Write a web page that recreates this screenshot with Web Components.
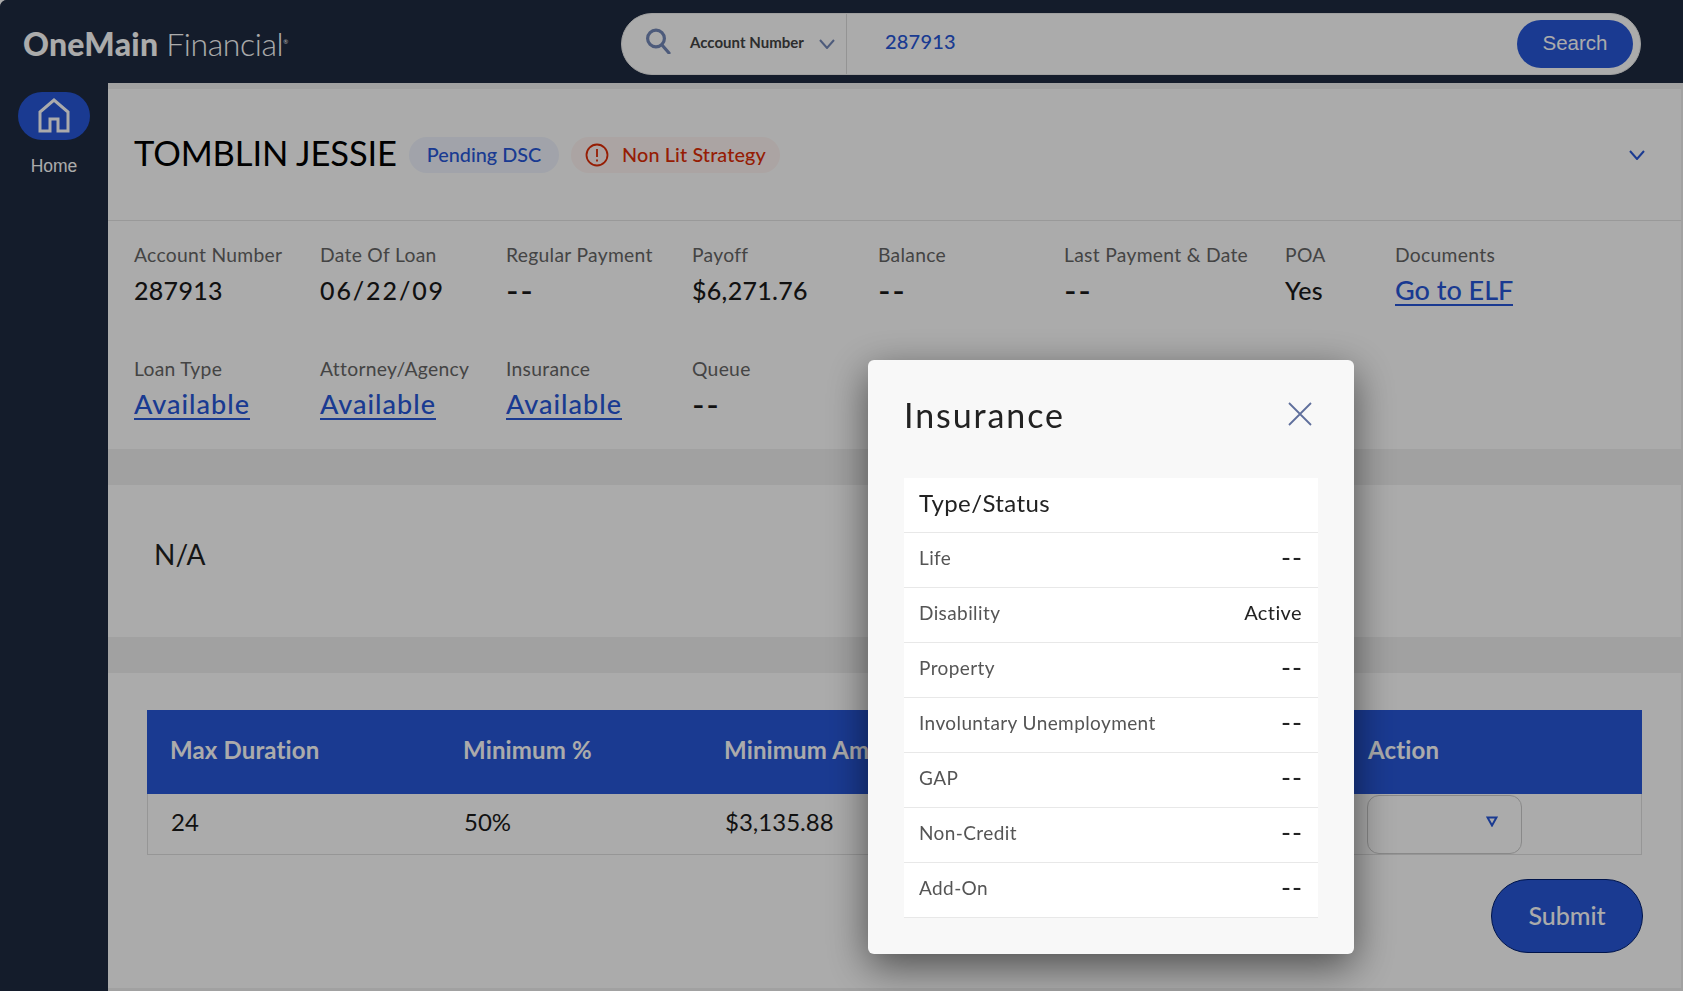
<!DOCTYPE html>
<html lang="en"><head><meta charset="utf-8"><title>Insurance</title>
<style>
html,body{margin:0;height:100%;background:#fff;overflow:hidden}
body{font-family:Lato,"Noto Sans",sans-serif;color:#1a1a1a}
</style></head><body>
<om-shell>
  <om-topbar></om-topbar>
  <om-sidebar></om-sidebar>
  <om-main>
    <om-account-head name="TOMBLIN JESSIE"></om-account-head>
    <om-details></om-details>
    <om-band></om-band>
    <om-note>N/A</om-note>
    <om-band></om-band>
    <om-offers></om-offers>
  </om-main>
</om-shell>
<om-modal title="Insurance">
  <om-ins-row head label="Type/Status"></om-ins-row>
  <om-ins-row label="Life" value="--"></om-ins-row>
  <om-ins-row label="Disability" value="Active"></om-ins-row>
  <om-ins-row label="Property" value="--"></om-ins-row>
  <om-ins-row label="Involuntary Unemployment" value="--"></om-ins-row>
  <om-ins-row label="GAP" value="--"></om-ins-row>
  <om-ins-row label="Non-Credit" value="--"></om-ins-row>
  <om-ins-row label="Add-On" value="--"></om-ins-row>
</om-modal>
<script>
const def=(name,html)=>customElements.define(name,class extends HTMLElement{
  connectedCallback(){ if(this.shadowRoot) return; const r=this.attachShadow({mode:'open'}); r.innerHTML=typeof html==='function'?html(this):html; }
});
def('om-shell',`<style>:host{display:grid;grid-template-columns:108px 1fr;grid-template-rows:83px 908px;width:1683px;height:991px;background:#1e2a40;border-top-left-radius:7px;overflow:hidden}</style><slot></slot>`);
def('om-topbar',`<style>
:host{display:flex;align-items:center;grid-column:1/3;background:#1e2a40;height:83px;padding:5px 0 0 23px;box-sizing:border-box}
.logo{font-size:32px;color:#fff;width:598px;white-space:nowrap;letter-spacing:-.2px;line-height:1}
.logo b{font-weight:900;letter-spacing:.25px}.logo span{font-weight:300;letter-spacing:-.4px}.logo sup{font-size:6px;font-weight:400}
.search{flex:none;width:1020px;height:62px;box-sizing:border-box;border-radius:31px;background:#fff;display:flex;align-items:center;border:1px solid #eee}
.sel{width:225px;height:100%;box-sizing:border-box;border-right:1px solid #ddd;display:flex;align-items:center;padding-left:24px}
.sel .i{margin:-6px 0 0 -1px}
.sel .t{font-size:15px;font-weight:700;color:#444;margin:0 0 4px 19px;letter-spacing:.02px;white-space:nowrap}
.sel .c{margin:0 0 1px 15px}
.val{flex:1;padding:0 0 6px 38px;font-size:20px;font-weight:500;color:#2757d9;letter-spacing:.2px}
.btn{width:116px;height:48px;border-radius:24px;background:#2757d9;color:#fff;font:20.5px "Liberation Sans",sans-serif;display:flex;align-items:center;justify-content:center;margin-right:7px;padding-bottom:2px;box-sizing:border-box}
</style>
<div class="logo"><b>OneMain</b> <span>Financial</span><sup>®</sup></div>
<div class="search"><div class="sel">
<svg class="i" width="26" height="26" viewBox="0 0 26 26" fill="none" stroke="#7488b8" stroke-width="3.2"><circle cx="11" cy="10.5" r="8.4"/><path d="M17 17l7 8" stroke-linecap="round"/></svg>
<span class="t">Account Number</span>
<svg class="c" width="16" height="10" viewBox="0 0 16 10" fill="none" stroke="#7488b8" stroke-width="2"><path d="M1 1l7 8 7-8"/></svg>
</div><div class="val">287913</div><div class="btn">Search</div></div>`);
def('om-sidebar',`<style>
:host{display:flex;flex-direction:column;align-items:center;background:#1e2a40;padding-top:9px;box-sizing:border-box}
.pill{width:72px;height:48px;border-radius:24px;background:#2757d9;display:flex;align-items:center;justify-content:center}
.t{color:#fff;font:17.5px "Liberation Sans",sans-serif;margin-top:16px}
</style><div class="pill"><svg width="34" height="36" viewBox="0 0 34 36" fill="none" stroke="#fff" stroke-width="3"><path d="M3 33V14L17 2l14 12v19H21V21h-8v12z" stroke-linejoin="miter"/></svg></div><div class="t">Home</div>`);
def('om-main',`<style>
:host{display:block;background:#f0f0f0;padding:6px 2px 3px 0;box-sizing:border-box;height:908px}
.card{background:#fff;height:100%;display:flex;flex-direction:column}
</style><div class="card"><slot></slot></div>`);
def('om-account-head',h=>`<style>
:host{display:flex;align-items:center;height:132px;box-sizing:border-box;border-bottom:1px solid #e4e4e4;padding:0 36px 0 26px;flex:none}
h1{margin:0 0 4px;font-size:34.5px;font-weight:400;color:#000;letter-spacing:-.1px;white-space:nowrap;width:275px}
.pill{height:36px;border-radius:18px;display:flex;align-items:center;justify-content:center;font-size:19.8px;box-sizing:border-box;white-space:nowrap;font-weight:500;padding-bottom:2px}
.pill svg{margin-top:2px}
.p1{width:150px;background:#f0f4fe;color:#2757d9}
.p2{width:209px;background:#fff5f3;color:#e02c05;margin-left:12px;gap:13px;letter-spacing:.13px}
.sp{flex:1}
</style><h1>${h.getAttribute('name')}</h1><div class="pill p1">Pending DSC</div>
<div class="pill p2"><svg width="24" height="24" viewBox="0 0 24 24" fill="none" stroke="#e02c05" stroke-width="1.8"><circle cx="12" cy="12" r="10.5"/><path d="M12 6v8M12 16.6v2" /></svg><span>Non Lit Strategy</span></div>
<div class="sp"></div><svg width="16" height="10" viewBox="0 0 16 10" fill="none" stroke="#2757d9" stroke-width="2"><path d="M1 1l7 8 7-8"/></svg>`);
def('om-field',h=>{const v=h.getAttribute('value'),ls=h.getAttribute('ls');return `<style>
:host{display:block;box-sizing:border-box}
.l{font-size:19.3px;color:#666;line-height:24px;white-space:nowrap;letter-spacing:.3px}
.v{font-size:25px;color:#1a1a1a;line-height:30px;margin-top:8px;white-space:nowrap;font-weight:500;letter-spacing:${ls||.3}px}
.v a{color:#2757d9;text-decoration:none;border-bottom:2px solid #2757d9;display:inline-block;line-height:28px;font-size:27px;letter-spacing:${ls||0}px}
.v.d{font-size:34px;letter-spacing:1.5px;font-weight:400}
</style><div class="l">${h.getAttribute('label')}</div><div class="v${v==='--'?' d':''}">${h.hasAttribute('link')?`<a href="#">${v}</a>`:v}</div>`});
def('om-details',`<style>
:host{display:flex;flex-direction:column;gap:51px;padding:22px 0 0 26px;height:228px;box-sizing:border-box;flex:none}
.row{display:grid;grid-template-columns:186px 186px 186px 186px 186px 221px 110px 200px;align-items:start}
</style>
<div class="row">
<om-field label="Account Number" value="287913"></om-field>
<om-field label="Date Of Loan" value="06/22/09" ls="1.9"></om-field>
<om-field label="Regular Payment" value="--"></om-field>
<om-field label="Payoff" value="$6,271.76"></om-field>
<om-field label="Balance" value="--"></om-field>
<om-field label="Last Payment &amp; Date" value="--"></om-field>
<om-field label="POA" value="Yes"></om-field>
<om-field label="Documents" value="Go to ELF" link></om-field>
</div>
<div class="row">
<om-field label="Loan Type" value="Available" link ls="1"></om-field>
<om-field label="Attorney/Agency" value="Available" link ls="1"></om-field>
<om-field label="Insurance" value="Available" link ls="1"></om-field>
<om-field label="Queue" value="--"></om-field>
</div>`);
def('om-band',`<style>:host{display:block;height:36px;background:#f0f0f0;flex:none}</style>`);
def('om-note',`<style>:host{display:flex;align-items:center;height:152px;padding:0 0 15px 46px;box-sizing:border-box;font-size:28px;color:#222;flex:none}</style><slot></slot>`);
def('om-offers',`<style>
:host{display:flex;flex-direction:column;padding:37px 38px 0 39px;flex:1}
.t{border:1px solid #e0e0e0;border-top:0;width:1495px;box-sizing:border-box}
.r{display:grid;grid-template-columns:293px 261px 644px 1fr;padding-left:23px}
.h{background:#2757d9;color:#fff;height:84px;font-size:24px;font-weight:700;align-items:center;margin:0 -1px;letter-spacing:.15px;padding-bottom:5px;box-sizing:border-box}
.b{height:60px;font-size:24px;color:#1a1a1a;align-items:center}
.b span{padding-bottom:6px}
.s{width:155px;height:59px;margin-left:-2px;border:1px solid #ccc;border-radius:12px;box-sizing:border-box;display:flex;align-items:center;justify-content:flex-end;padding:0 23px 6px 0}
.f{display:flex;justify-content:flex-end;margin-top:24px}
.sub{width:152px;height:74px;border-radius:37px;background:#2757d9;border:1px solid #001f70;box-sizing:border-box;color:#fff;font-size:25px;font-weight:500;display:flex;align-items:center;justify-content:center;padding-bottom:2px}
</style>
<div class="t"><div class="r h"><span>Max Duration</span><span>Minimum %</span><span>Minimum Amount</span><span>Action</span></div>
<div class="r b"><span>24</span><span>50%</span><span>$3,135.88</span><div class="s"><svg width="12" height="11" viewBox="0 0 12 11" fill="none" stroke="#2757d9" stroke-width="2"><path d="M1.5 1.5h9L6 9.5z"/></svg></div></div></div>
<div class="f"><div class="sub">Submit</div></div>`);
def('om-modal',h=>`<style>
:host{position:fixed;inset:0;display:block;background:rgba(0,0,0,.33)}
.m{position:absolute;left:868px;top:360px;width:486px;height:594px;background:#f8f8f8;border-radius:6px;box-shadow:0 12px 40px rgba(0,0,0,.55);box-sizing:border-box;padding:0 36px}
.h{display:flex;align-items:center;justify-content:space-between;height:118px;padding-bottom:10px;box-sizing:border-box}
h2{margin:0;font-size:34px;font-weight:400;color:#222;letter-spacing:1.9px}
.b{background:#fff}
svg{margin-right:6px}
</style><div class="m"><div class="h"><h2>${h.getAttribute('title')}</h2><svg width="24" height="24" viewBox="0 0 24 24" fill="none" stroke="#5f6f9c" stroke-width="1.8"><path d="M1 1l22 22M23 1L1 23"/></svg></div><div class="b"><slot></slot></div></div>`);
def('om-ins-row',h=>{const v=h.getAttribute('value')||'';return `<style>
:host{display:flex;align-items:center;justify-content:space-between;height:55px;box-sizing:border-box;border-bottom:1px solid #e8e8e8;padding:0 16px 5px 15px;font-size:19px;color:#555;letter-spacing:.4px}
:host([head]){font-size:24px;color:#222;height:55px}
.v{color:#222;font-size:20px;line-height:24px;padding-bottom:2px}
.v.d{font-size:27px;letter-spacing:1px;padding-bottom:1px;margin-right:-1px}
</style><span>${h.getAttribute('label')}</span><span class="v${v==='--'?' d':''}">${v}</span>`});
</script>
</body></html>
